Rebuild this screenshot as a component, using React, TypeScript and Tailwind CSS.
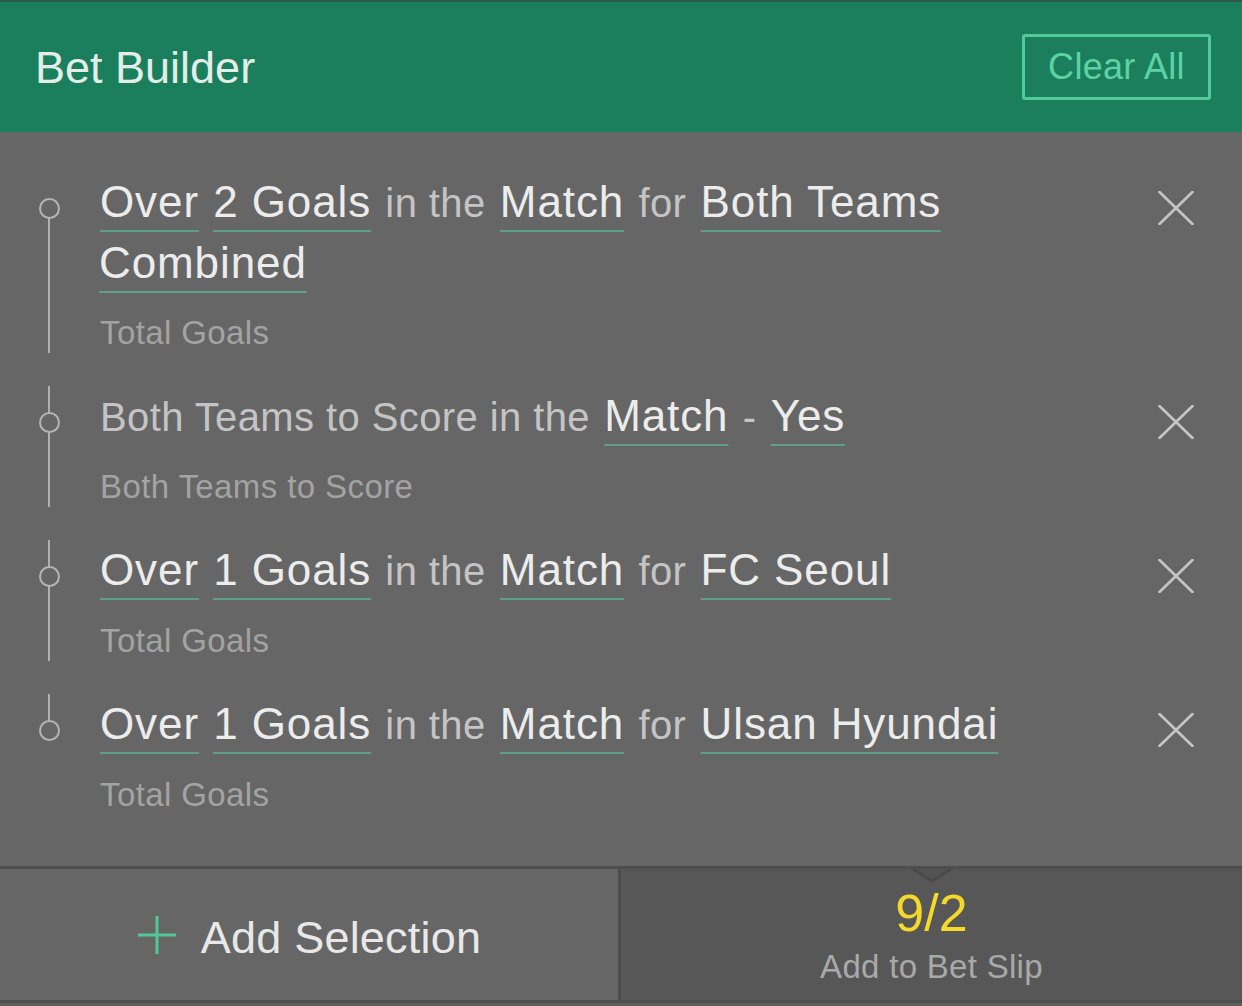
import React from "react";

type Part = [string, boolean];

const items: { parts: Part[]; sub: string }[] = [
  {
    parts: [
      ["Over", true],
      ["2 Goals", true],
      ["in the", false],
      ["Match", true],
      ["for", false],
      ["Both Teams Combined", true],
    ],
    sub: "Total Goals",
  },
  {
    parts: [
      ["Both Teams to Score in the", false],
      ["Match", true],
      ["-", false],
      ["Yes", true],
    ],
    sub: "Both Teams to Score",
  },
  {
    parts: [
      ["Over", true],
      ["1 Goals", true],
      ["in the", false],
      ["Match", true],
      ["for", false],
      ["FC Seoul", true],
    ],
    sub: "Total Goals",
  },
  {
    parts: [
      ["Over", true],
      ["1 Goals", true],
      ["in the", false],
      ["Match", true],
      ["for", false],
      ["Ulsan Hyundai", true],
    ],
    sub: "Total Goals",
  },
];

function CloseIcon() {
  return (
    <svg width="36" height="34" viewBox="0 0 36 34">
      <line x1="1.5" y1="1" x2="34.5" y2="33" stroke="#c6c6c6" strokeWidth="2.6" strokeLinecap="round" />
      <line x1="34.5" y1="1" x2="1.5" y2="33" stroke="#c6c6c6" strokeWidth="2.6" strokeLinecap="round" />
    </svg>
  );
}

export default function App() {
  const font = { fontFamily: '"Liberation Sans", Arial, sans-serif' };
  return (
    <div className="w-[1242px] h-[1006px] flex flex-col bg-[#666666] overflow-hidden" style={font}>
      {/* Header */}
      <div className="h-[132px] shrink-0 bg-[#1b7f5e] border-t-2 border-[#2b5a4b] flex items-center justify-between pl-[35px] pr-[31px]">
        <div className="text-[45px] leading-none text-[#e3eee8]">Bet Builder</div>
        <div className="h-[66px] w-[189px] border-[3px] border-[#4fcb9c] rounded-[3px] flex items-center justify-center text-[36px] leading-none text-[#5dd2a4] tracking-[0.3px]">
          Clear All
        </div>
      </div>

      {/* List */}
      <div className="flex-1 pt-[40px]">
        {items.map((item, idx) => {
          const first = idx === 0;
          const last = idx === items.length - 1;
          return (
            <div key={idx} className={`flex ${last ? "" : "pb-[33px]"}`}>
              <div className="relative w-[100px] shrink-0">
                {first ? (
                  <div className="absolute left-[48px] w-[2px] top-[36px] bottom-0 bg-[#b0b0b0]" />
                ) : last ? (
                  <div className="absolute left-[48px] w-[2px] top-0 h-[36px] bg-[#b0b0b0]" />
                ) : (
                  <div className="absolute left-[48px] w-[2px] top-0 bottom-0 bg-[#b0b0b0]" />
                )}
                <div className="absolute left-[39px] top-[26px] w-[21px] h-[21px] rounded-full border-2 border-[#b5b5b5] bg-[#666666]" />
              </div>
              <div className="flex-1 min-w-0 -ml-[1px]">
                <div className="text-[44px] leading-[60px]">
                  {item.parts.map(([t, hl], i) => (
                    <React.Fragment key={i}>
                      {i > 0 ? " " : null}
                      {hl ? (
                        <span className="mx-[1px] text-[44px] tracking-[0.9px] text-[#ececec] underline decoration-2 decoration-[#5e9f8a] underline-offset-[13px]">
                          {t}
                        </span>
                      ) : (
                        <span className="mx-[1px] text-[40px] tracking-[0.4px] text-[#c4c4c4]">{t}</span>
                      )}
                    </React.Fragment>
                  ))}
                </div>
                <div className="mt-[20px] ml-[1px] text-[33px] leading-[40px] tracking-[0.4px] text-[#a3a3a3]">{item.sub}</div>
              </div>
              <div className="shrink-0 w-[36px] ml-[30px] mr-[48px] pt-[19px]">
                <CloseIcon />
              </div>
            </div>
          );
        })}
      </div>

      {/* Footer */}
      <div className="shrink-0 border-t-[3px] border-[#4d4d4d] h-[134px] flex">
        <div className="w-[618px] shrink-0 bg-[#666666] flex items-center justify-center pt-[6px]">
          <svg width="40" height="40" viewBox="0 0 40 40" className="mr-[24px] -mt-[6px]">
            <line x1="20" y1="1" x2="20" y2="39" stroke="#52c79c" strokeWidth="3" />
            <line x1="1" y1="20" x2="39" y2="20" stroke="#52c79c" strokeWidth="3" />
          </svg>
          <span className="text-[45px] leading-none text-[#e8e8e8] tracking-[0.2px]">Add Selection</span>
        </div>
        <div className="w-[3px] shrink-0 bg-[#4d4d4d]" />
        <div className="relative flex-1 bg-[#575757] flex flex-col items-center justify-center gap-[8px] pt-[4px]">
          <svg
            width="44"
            height="15"
            viewBox="0 0 44 15"
            className="absolute top-0 left-1/2 -translate-x-1/2"
          >
            <polygon points="0,0 22,14 44,0" fill="#4a4a4a" />
            <polygon points="5,0 22,10.5 39,0" fill="#535353" />
          </svg>
          <div className="text-[52px] leading-[52px] text-[#f4d92a]">9/2</div>
          <div className="text-[33px] leading-[40px] text-[#a9a9a9] tracking-[0.3px]">Add to Bet Slip</div>
        </div>
      </div>
      <div className="h-[3px] shrink-0 bg-[#4f4f4f]" />
      <div className="h-[3px] shrink-0 bg-[#5e5e5e]" />
    </div>
  );
}
